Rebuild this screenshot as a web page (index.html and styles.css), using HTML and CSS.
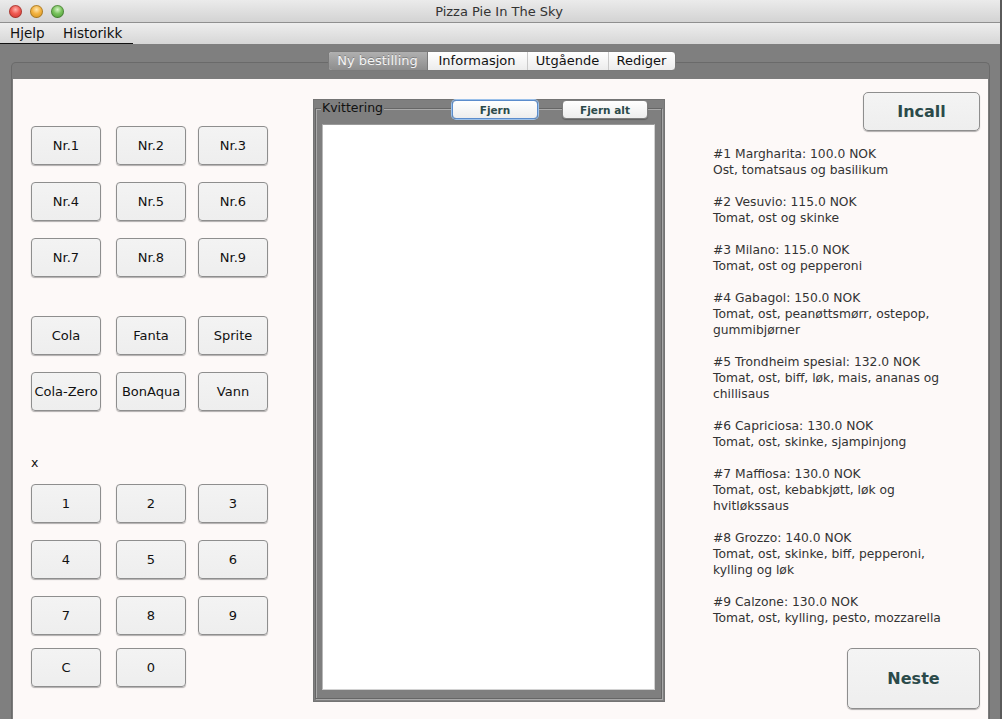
FILE: index.html
```
<!DOCTYPE html>
<html lang="no">
<head>
<meta charset="utf-8">
<title>Pizza Pie In The Sky</title>
<link rel="stylesheet" href="styles.css">
</head>
<body>
<div class="window">
  <div class="titlebar">
    <div class="lights">
      <span class="light red"></span>
      <span class="light yellow"></span>
      <span class="light green"></span>
    </div>
    <div class="title">Pizza Pie In The Sky</div>
  </div>
  <div class="menubar">
    <div class="menus">
      <span class="menu menu-hjelp">Hjelp</span>
      <span class="menu">Historikk</span>
    </div>
  </div>
  <div class="main">
    <div class="tabs">
      <div class="tabgroup">
        <span class="tab tab-ny selected">Ny bestilling</span>
        <span class="tab tab-info">Informasjon</span>
        <span class="tab tab-ut">Utgående</span>
        <span class="tab tab-red">Rediger</span>
      </div>
    </div>
    <div class="pane">
      <div class="content">
        <div class="leftcol">
          <div class="grid3">
            <button class="btn">Nr.1</button>
            <button class="btn">Nr.2</button>
            <button class="btn">Nr.3</button>
            <button class="btn">Nr.4</button>
            <button class="btn">Nr.5</button>
            <button class="btn">Nr.6</button>
            <button class="btn">Nr.7</button>
            <button class="btn">Nr.8</button>
            <button class="btn">Nr.9</button>
          </div>
          <div class="grid3 drinks">
            <button class="btn">Cola</button>
            <button class="btn">Fanta</button>
            <button class="btn">Sprite</button>
            <button class="btn">Cola-Zero</button>
            <button class="btn">BonAqua</button>
            <button class="btn">Vann</button>
          </div>
          <div class="xlabel">x</div>
          <div class="grid3 numpad">
            <button class="btn">1</button>
            <button class="btn">2</button>
            <button class="btn">3</button>
            <button class="btn">4</button>
            <button class="btn">5</button>
            <button class="btn">6</button>
            <button class="btn">7</button>
            <button class="btn">8</button>
            <button class="btn">9</button>
          </div>
          <div class="grid3 lastrow">
            <button class="btn">C</button>
            <button class="btn">0</button>
          </div>
        </div>

        <div class="midcol">
          <div class="receipt">
            <div class="frame">
              <div class="frame-head">
                <span class="frame-title">Kvittering</span>
                <button class="smallbtn focused">Fjern</button>
                <span></span>
                <button class="smallbtn">Fjern alt</button>
              </div>
              <div class="textarea"></div>
            </div>
          </div>
        </div>

        <div class="rightcol">
          <button class="bigbtn incall">Incall</button>
          <div class="menu-list">
            <p>#1 Margharita: 100.0 NOK<br>Ost, tomatsaus og basilikum</p>
            <p>#2 Vesuvio: 115.0 NOK<br>Tomat, ost og skinke</p>
            <p>#3 Milano: 115.0 NOK<br>Tomat, ost og pepperoni</p>
            <p>#4 Gabagol: 150.0 NOK<br>Tomat, ost, peanøttsmørr, ostepop,<br>gummibjørner</p>
            <p>#5 Trondheim spesial: 132.0 NOK<br>Tomat, ost, biff, løk, mais, ananas og<br>chillisaus</p>
            <p>#6 Capriciosa: 130.0 NOK<br>Tomat, ost, skinke, sjampinjong</p>
            <p>#7 Maffiosa: 130.0 NOK<br>Tomat, ost, kebabkjøtt, løk og<br>hvitløkssaus</p>
            <p>#8 Grozzo: 140.0 NOK<br>Tomat, ost, skinke, biff, pepperoni,<br>kylling og løk</p>
            <p>#9 Calzone: 130.0 NOK<br>Tomat, ost, kylling, pesto, mozzarella</p>
          </div>
          <button class="bigbtn neste">Neste</button>
        </div>
      </div>
    </div>
  </div>
</div>
</body>
</html>
```

FILE: styles.css
```
* { box-sizing: border-box; }

html, body {
  margin: 0;
  padding: 0;
}

body {
  width: 1002px;
  height: 719px;
  overflow: hidden;
  background: #7f7f7f;
  font-family: "DejaVu Sans", "Liberation Sans", sans-serif;
  color: #111;
}

.window {
  width: 1002px;
  height: 719px;
  display: flex;
  flex-direction: column;
  border-right: 2px solid #5a5a5a;
}

/* Title bar */
.titlebar {
  height: 23px;
  flex: none;
  display: flex;
  align-items: center;
  background: linear-gradient(#ebebeb, #d3d3d3);
  border-bottom: 1px solid #8f8f8f;
}

.lights {
  display: flex;
  gap: 8px;
  padding-left: 9px;
  padding-top: 1px;
}

.light {
  width: 13px;
  height: 13px;
  border-radius: 50%;
  display: block;
  box-shadow: inset 0 0 0 1px rgba(0,0,0,0.25);
}

.light.red { background: radial-gradient(circle at 50% 35%, #ffb3ad 0, #f05a52 40%, #c42c25 100%); }
.light.yellow { background: radial-gradient(circle at 50% 35%, #ffe7b0 0, #f3b341 40%, #c98a17 100%); }
.light.green { background: radial-gradient(circle at 50% 35%, #d6f5c7 0, #79c35d 40%, #3e8f2a 100%); }

.title {
  flex: 1;
  text-align: center;
  font-size: 13px;
  color: #333;
  margin-right: 66px;
  padding-top: 1px;
}

/* Menu bar */
.menubar {
  height: 21px;
  flex: none;
  background: linear-gradient(#eeeeee, #d6d6d6);
}

.menus {
  width: 133px;
  height: 21px;
  border-bottom: 1px solid #111;
  display: flex;
  align-items: center;
  font-size: 13.5px;
  color: #111;
}

.menu { padding-left: 10px; }
.menu-hjelp { width: 53px; }

/* Main gray area */
.main {
  flex: 1;
  padding: 7px 10px 0 11px;
  display: flex;
  flex-direction: column;
  min-height: 0;
}

.tabs {
  display: flex;
  justify-content: center;
  position: relative;
  z-index: 1;
  height: 20px;
  flex: none;
  padding-left: 2px;
}

.tabgroup {
  display: flex;
  height: 20px;
  border: 1px solid #7a7a7a;
  border-radius: 4px;
  overflow: hidden;
  background: linear-gradient(#ffffff, #ececec);
}

.tab {
  height: 18px;
  line-height: 18px;
  font-size: 13px;
  text-align: center;
  color: #111;
  border-left: 1px solid #c9c9c9;
}

.tab:first-child { border-left: none; }

.tab-ny { width: 99px; }
.tab-info { width: 99px; }
.tab-ut { width: 81px; }
.tab-red { width: 67px; }

.tab.selected {
  background: linear-gradient(#b0b0b0, #8d8d8d);
  color: #f4f4f4;
  text-shadow: 0 -1px 0 rgba(0,0,0,0.25);
  border-right: 1px solid #7a7a7a;
}

.tab.selected + .tab { border-left: none; }

.pane {
  flex: 1;
  margin-top: -9px;
  border: 1px solid #6a6a6a;
  border-bottom: none;
  border-radius: 5px 5px 0 0;
  background: #7c7c7c;
  padding: 16px 1px 0 1px;
  display: flex;
  min-height: 0;
}

.content {
  flex: 1;
  background: #fdf9f8;
  display: flex;
  height: 660px;
}

/* Buttons */
.btn {
  width: 70px;
  height: 39px;
  padding: 0;
  font-family: "DejaVu Sans", sans-serif;
  font-size: 13px;
  color: #111;
  background: linear-gradient(#f3f3f3, #eeeeee);
  border: 1px solid #8e8e8e;
  border-radius: 4px;
  box-shadow: 0 1px 1px rgba(0,0,0,0.3);
  white-space: nowrap;
}

/* Left column */
.leftcol {
  width: 300px;
  flex: none;
  padding: 47px 0 0 18px;
}

.grid3 {
  display: grid;
  grid-template-columns: 85px 82px 70px;
  row-gap: 17px;
}

.drinks { margin-top: 39px; }

.xlabel {
  margin-top: 44px;
  height: 16px;
  line-height: 16px;
  font-size: 12.5px;
}

.numpad { margin-top: 13px; }
.lastrow { margin-top: 13px; }

/* Middle column: receipt */
.midcol {
  width: 352px;
  flex: none;
  padding-top: 20px;
}

.receipt {
  height: 603px;
  background: #7f7f7f;
  border: 1px solid #747474;
  padding: 8px 2px 2px 1px;
  display: flex;
}

.frame {
  flex: 1;
  border: 1px solid #666;
  box-shadow: 1px 1px 0 #a9a9a9, inset 1px 1px 0 #a9a9a9;
  display: flex;
  flex-direction: column;
}

.frame-head {
  margin-top: -9px;
  height: 19px;
  display: grid;
  grid-template-columns: 136px 86px 24px 86px;
  align-items: start;
}

.frame-title {
  justify-self: start;
  margin-left: 5px;
  padding: 0 1px;
  background: #7f7f7f;
  font-size: 12.5px;
  line-height: 16px;
  color: #111;
}

.smallbtn {
  height: 19px;
  padding: 0;
  font-family: "DejaVu Sans", sans-serif;
  font-size: 10.5px;
  font-weight: bold;
  color: #2c4a4a;
  background: linear-gradient(#ffffff, #ededed);
  border: 1px solid #7e7e7e;
  border-radius: 4px;
  box-shadow: 0 1px 1px rgba(0,0,0,0.25);
}

.smallbtn.focused {
  border-color: #5b8ccc;
  box-shadow: 0 0 0 1px #9cc1ea, 0 1px 1px rgba(0,0,0,0.25);
}

.textarea {
  flex: 1;
  margin: 5px 6px 8px 6px;
  background: #ffffff;
  border: 1px solid #d2d2d2;
  border-top-color: #9a9a9a;
  border-left-color: #b8b8b8;
}

/* Right column */
.rightcol {
  flex: 1;
  display: flex;
  flex-direction: column;
  padding: 13px 8px 0 48px;
}

.bigbtn {
  align-self: flex-end;
  padding: 0;
  font-family: "DejaVu Sans", sans-serif;
  font-size: 16px;
  font-weight: bold;
  color: #2b4a4a;
  background: linear-gradient(#f4f4f4, #eeeeee);
  border: 1px solid #8e8e8e;
  border-radius: 5px;
  box-shadow: 0 1px 1px rgba(0,0,0,0.3);
}

.incall {
  width: 117px;
  height: 39px;
}

.menu-list {
  margin-top: 15px;
  font-size: 12.3px;
  line-height: 16px;
  color: #333;
  white-space: nowrap;
}

.menu-list p {
  margin: 0 0 16px 0;
}

.menu-list p:last-child { margin-bottom: 0; }

.neste {
  margin-top: 22px;
  width: 133px;
  height: 61px;
}
```
